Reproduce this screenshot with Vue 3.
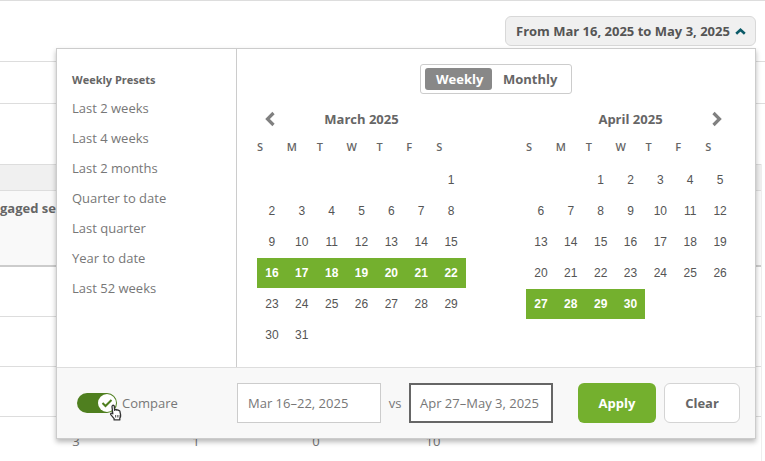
<template>
  <div class="page">
    <div class="topbar">
      <button class="range-btn">
        From Mar 16, 2025 to May 3, 2025
        <svg class="range-chevron" width="11" height="7" viewBox="0 0 11 7">
          <path d="M1.2 5.8 5.5 1.800 9.800 5.800" fill="none" stroke="#0b5a68" stroke-width="2.600" />
        </svg>
      </button>
    </div>
    <div class="plain-row"></div>
    <div class="gap-row"></div>

    <div class="table">
      <div class="table-band"></div>
      <div class="table-head">gaged se</div>
      <div class="table-row"></div>
      <div class="table-row"></div>
      <div class="table-row"></div>
      <div class="table-last">
        <span>3</span>
        <span>1</span>
        <span>0</span>
        <span class="last-ten">10</span>
      </div>
    </div>

    <div class="popover">
      <div class="popover-main">
        <div class="presets">
          <div class="presets-title">Weekly Presets</div>
          <div v-for="p in presets" :key="p" class="preset">{{ p }}</div>
        </div>

        <div class="calendars">
          <div class="mode-switch">
            <span class="mode mode-on">Weekly</span>
            <span class="mode">Monthly</span>
          </div>

          <div class="months">
            <div v-for="m in months" :key="m.name" class="month">
              <div class="month-head">
                <svg v-if="m.nav === 'prev'" class="nav nav-prev" width="12" height="16" viewBox="0 0 12 16">
                  <path d="M9.500 2 3.500 8l6 6" fill="none" stroke="#808080" stroke-width="3.200" />
                </svg>
                <svg v-if="m.nav === 'next'" class="nav nav-next" width="12" height="16" viewBox="0 0 12 16">
                  <path d="M2.500 2l6 6-6 6" fill="none" stroke="#808080" stroke-width="3.200" />
                </svg>
                {{ m.name }}
              </div>
              <div class="weekdays">
                <span v-for="(d, i) in weekdays" :key="i">{{ d }}</span>
              </div>
              <div class="days">
                <span
                  v-for="c in cells(m)"
                  :key="c.key"
                  class="day"
                  :class="{ 'day-on': c.on }"
                >{{ c.label }}</span>
              </div>
            </div>
          </div>
        </div>
      </div>

      <div class="popover-foot">
        <div class="compare">
          <div class="toggle">
            <div class="knob">
              <svg width="12" height="10" viewBox="0 0 12 10">
                <path d="M1.500 5 4.500 8 10.500 2" fill="none" stroke="#4f7f1f" stroke-width="2" />
              </svg>
            </div>
            <svg class="hand" width="14" height="18" viewBox="0 0 14 18">
              <path
                d="M3.400 1.600c.7-.7 1.800-.3 1.900.7l.3 4 .6-.6c.6-.3 1.200-.1 1.500.4.600-.4 1.300-.2 1.600.4.700-.3 1.400.1 1.600.8l.7 3.600c.2 1.300-.1 2.400-.8 3.300v1.700H5.100v-1.300L1.800 10.700c-.6-.8.300-1.900 1.300-1.400l.7.500L3 2.800c0-.5.100-.9.400-1.200z"
                fill="#fff"
                stroke="#333"
                stroke-width="1.300"
                stroke-linejoin="round"
              />
              <path d="M6.500 11v2.500M8.300 11v2.500M10 11v2.500" stroke="#555" stroke-width="0.900" />
            </svg>
          </div>
          <span class="compare-label">Compare</span>
        </div>
        <div class="date-input">Mar 16–22, 2025</div>
        <span class="vs">vs</span>
        <div class="date-input date-input-on">Apr 27–May 3, 2025</div>
        <button class="btn btn-apply">Apply</button>
        <button class="btn btn-clear">Clear</button>
      </div>
    </div>
  </div>
</template>

<script setup>
const presets = [
  "Last 2 weeks",
  "Last 4 weeks",
  "Last 2 months",
  "Quarter to date",
  "Last quarter",
  "Year to date",
  "Last 52 weeks",
];

const weekdays = ["S", "M", "T", "W", "T", "F", "S"];

const months = [
  { name: "March 2025", nav: "prev", blanks: 6, total: 31, from: 16, to: 22 },
  { name: "April 2025", nav: "next", blanks: 2, total: 30, from: 27, to: 30 },
];

function cells(m) {
  const out = [];
  for (let i = 0; i < m.blanks; i++) out.push({ key: "b" + i, label: "", on: false });
  for (let d = 1; d <= m.total; d++) {
    out.push({ key: d, label: d, on: d >= m.from && d <= m.to });
  }
  return out;
}
</script>

<style>
html, body { margin: 0; background: #fff; }
</style>

<style scoped>
.page {
  position: relative;
  width: 765px;
  height: 461px;
  overflow: hidden;
  background: #fff;
  font-family: "Open Sans", sans-serif;
  color: #777;
}

.topbar {
  box-sizing: border-box;
  height: 62px;
  border-top: 1px solid #ddd;
  border-bottom: 1px solid #ddd;
  display: flex;
  justify-content: flex-end;
  align-items: flex-start;
  padding: 15px 9px 0 0;
}

.range-btn {
  box-sizing: border-box;
  width: 251px;
  height: 30px;
  display: flex;
  align-items: center;
  gap: 5px;
  padding: 0 0 0 10px;
  background: #f0f0f0;
  border: 1px solid #d8d8d8;
  border-radius: 6px;
  font-family: inherit;
  font-size: 13px;
  font-weight: 700;
  color: #555;
  white-space: nowrap;
}

.plain-row {
  box-sizing: border-box;
  height: 42px;
  border-bottom: 1px solid #ddd;
}

.gap-row { height: 60px; }

.table {
  width: 762px;
  box-sizing: border-box;
  border-right: 1px solid #eee;
}

.table-band {
  box-sizing: border-box;
  height: 27px;
  background: #f0f0f0;
  border-top: 1px solid #ddd;
  border-bottom: 1px solid #ddd;
}

.table-head {
  box-sizing: border-box;
  height: 76px;
  padding-top: 8px;
  background: #f9f9f9;
  border-bottom: 2px solid #ccc;
  font-size: 13px;
  font-weight: 700;
  line-height: 18px;
  color: #666;
  white-space: nowrap;
}

.table-row {
  box-sizing: border-box;
  height: 50px;
  border-bottom: 1px solid #ddd;
}

.table-last {
  display: grid;
  grid-template-columns: repeat(4, 120px);
  height: 48px;
  align-items: center;
  padding-left: 16px;
  font-size: 13px;
  text-align: center;
}

.last-ten { padding-right: 6px; }

.popover {
  position: absolute;
  left: 56px;
  top: 48px;
  box-sizing: border-box;
  width: 700px;
  height: 391px;
  display: flex;
  flex-direction: column;
  background: #fff;
  border: 1px solid #ccc;
  box-shadow: 0 3px 5px rgba(0, 0, 0, 0.28);
}

.popover-main {
  flex: 1;
  display: flex;
  min-height: 0;
}

.presets {
  box-sizing: border-box;
  width: 180px;
  padding: 24px 0 0 15px;
  border-right: 1px solid #ccc;
}

.presets-title {
  font-size: 11px;
  font-weight: 700;
  line-height: 14px;
  color: #666;
  margin-bottom: 6px;
}

.preset {
  font-size: 13px;
  line-height: 30px;
  color: #777;
}

.calendars {
  flex: 1;
  padding: 15px 0 0 20px;
}

.mode-switch {
  box-sizing: border-box;
  width: 152px;
  height: 30px;
  margin-left: 163px;
  padding: 3px 4px;
  display: flex;
  border: 1px solid #ccc;
  border-radius: 3px;
}

.mode {
  height: 22px;
  line-height: 22px;
  padding: 0 11px;
  font-size: 13px;
  font-weight: 700;
  color: #666;
}

.mode-on {
  width: 45px;
  background: #888;
  border-radius: 3px;
  color: #fff;
}

.months {
  display: flex;
  gap: 60px;
  margin-top: 15px;
}

.month { width: 209px; }

.month-head {
  position: relative;
  height: 20px;
  line-height: 20px;
  text-align: center;
  font-size: 13px;
  font-weight: 700;
  color: #666;
}

.nav {
  position: absolute;
  top: 2px;
}
.nav-prev { left: 7px; }
.nav-next { right: 12px; }

.weekdays {
  display: grid;
  grid-template-columns: repeat(7, 1fr);
  margin-top: 10px;
  height: 16px;
  line-height: 16px;
  font-size: 11px;
  font-weight: 600;
  color: #666;
}

.days {
  display: grid;
  grid-template-columns: repeat(7, 1fr);
  grid-auto-rows: 30px;
  row-gap: 1px;
  margin-top: 10px;
}

.day {
  line-height: 30px;
  text-align: center;
  font-family: "Liberation Sans", Arial, sans-serif;
  font-size: 12px;
  color: #555;
}

.day-on {
  background: #74b02e;
  color: #fff;
  font-weight: 700;
}

.popover-foot {
  box-sizing: border-box;
  height: 71px;
  display: flex;
  align-items: center;
  padding: 0 15px 0 20px;
  background: #f8f8f8;
  border-top: 1px solid #ddd;
}

.compare {
  display: flex;
  align-items: center;
  gap: 5px;
  width: 160px;
}

.toggle {
  position: relative;
  width: 40px;
  height: 20px;
  background: #4f7f1f;
  border-radius: 10px;
}

.knob {
  position: absolute;
  top: 1px;
  right: 1px;
  box-sizing: border-box;
  width: 18px;
  height: 18px;
  display: flex;
  align-items: center;
  justify-content: center;
  background: #fff;
  border-radius: 50%;
}

.hand {
  position: absolute;
  left: 32px;
  top: 11px;
}

.compare-label {
  font-size: 13px;
  color: #777;
}

.date-input {
  box-sizing: border-box;
  width: 144px;
  height: 40px;
  line-height: 38px;
  padding-left: 10px;
  background: #fff;
  border: 1px solid #ccc;
  font-size: 13px;
  color: #777;
  white-space: nowrap;
}

.date-input-on {
  border: 2px solid #666;
  line-height: 36px;
  padding-left: 9px;
}

.vs {
  width: 28px;
  text-align: center;
  font-size: 13px;
  color: #777;
}

.btn {
  box-sizing: border-box;
  height: 40px;
  border-radius: 6px;
  font-family: inherit;
  font-size: 13px;
  font-weight: 700;
  padding: 0;
}

.btn-apply {
  width: 78px;
  margin-left: 25px;
  background: #74b02e;
  border: none;
  color: #fff;
}

.btn-clear {
  width: 76px;
  margin-left: 8px;
  background: #fff;
  border: 1px solid #d4d4d4;
  color: #666;
}
</style>
